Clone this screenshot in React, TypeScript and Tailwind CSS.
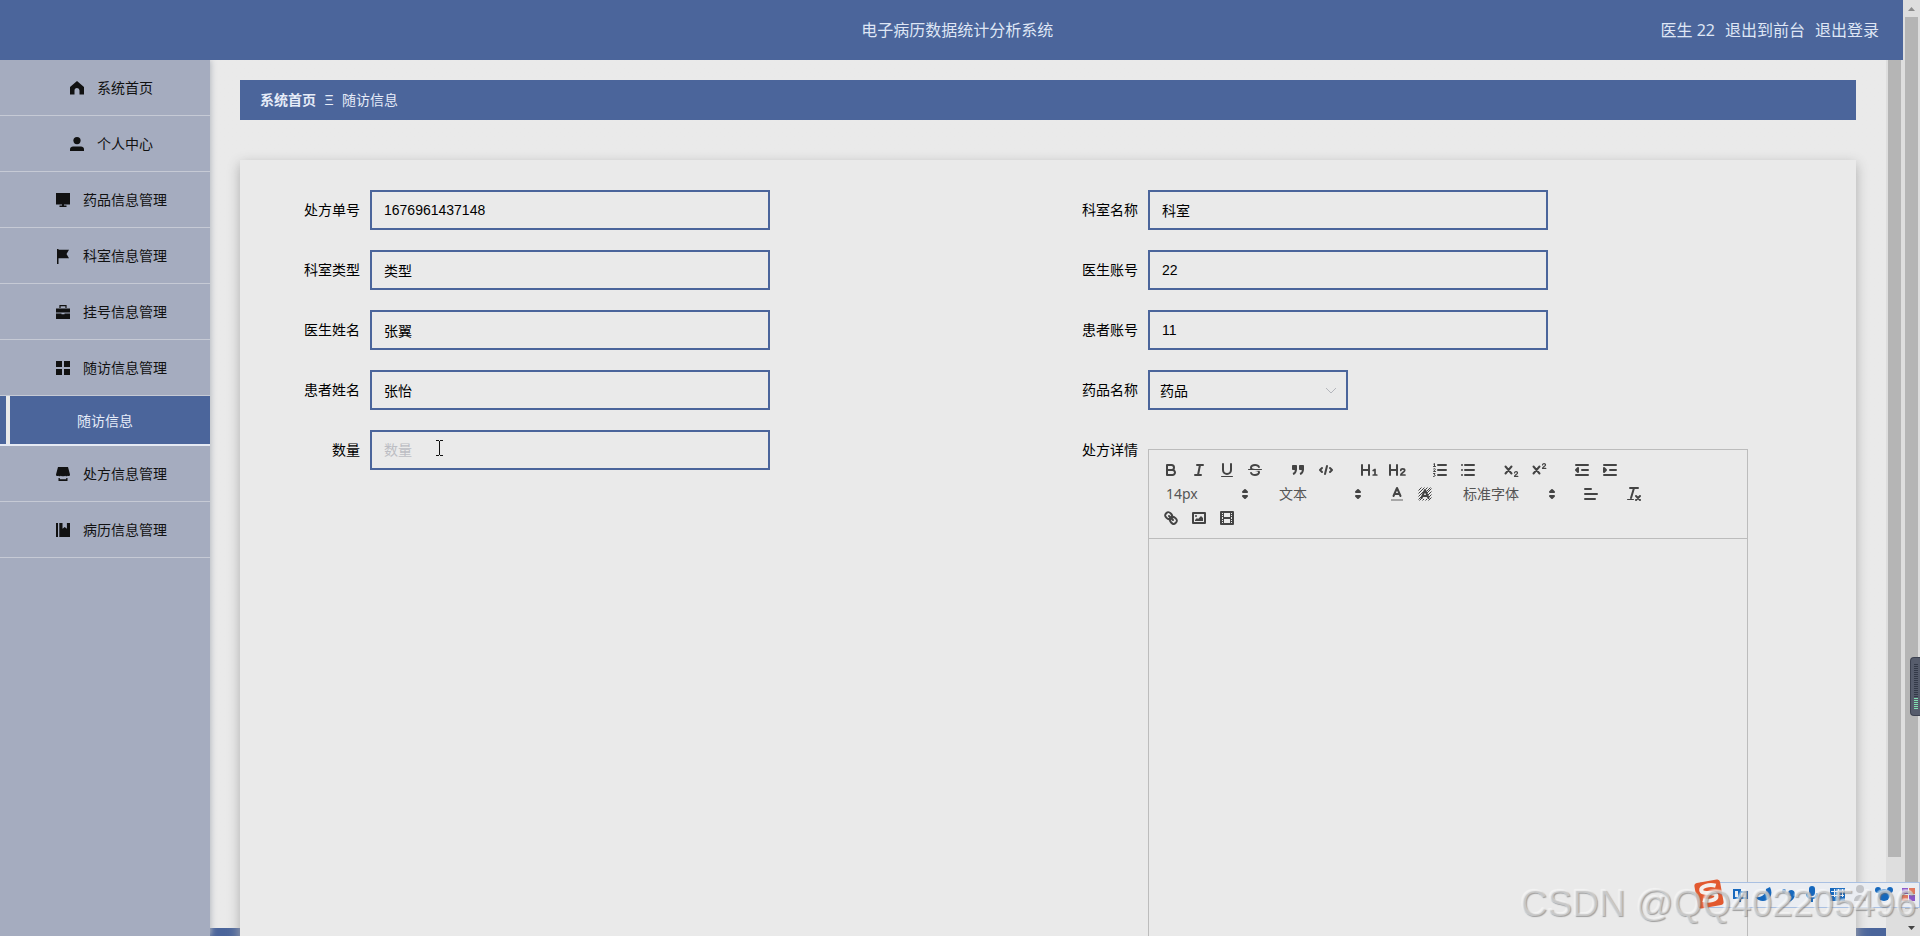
import type { ReactNode } from "react";

const NAV = [
  { icon: "home", label: "系统首页" },
  { icon: "user", label: "个人中心" },
  { icon: "monitor", label: "药品信息管理" },
  { icon: "flag", label: "科室信息管理" },
  { icon: "case", label: "挂号信息管理" },
  { icon: "grid", label: "随访信息管理", child: "随访信息" },
  { icon: "shop", label: "处方信息管理" },
  { icon: "book", label: "病历信息管理" },
];

const NAV_ICONS: Record<string, ReactNode> = {
  home: <path d="M7 0 0 6v7.500h4.500V9.500a2.500 2.500 0 0 1 5 0v4H14V6z" />,
  user: (
    <>
      <circle cx="7" cy="3.600" r="3.600" />
      <path d="M0 14v-1.500C0 10.300 1.500 9.500 3 9.500h8c1.500 0 3 .8 3 3V14z" />
    </>
  ),
  monitor: <path d="M0 0h14v11.500H0zM6 11.500h2v1h2.500V14h-7v-1.500H6z" />,
  flag: <path d="M1 0h1.500v.8H13L10.500 5l2.500 4.200H2.500V15H1z" />,
  case: (
    <>
      <path d="M4 3V.7h6V3" fill="none" stroke="currentColor" strokeWidth="1.200" />
      <path d="M0 3.500h14v4H0zM0 8.500h5.500v.8h3v-.8H14V14H0z" />
    </>
  ),
  grid: <path d="M0 0h6v6H0zM8 0h6v6H8zM0 8h6v6H0zM8 8h6v6H8z" />,
  shop: <path d="M2 0h10l2 7.500c0 1.500-1.300 2-2.300 1.300-.8.700-1.800.700-2.500 0-.8.700-3.600.700-4.400 0-.7.700-1.700.700-2.500 0C1.300 9.500 0 9 0 7.500zM2.500 11h1.300v1.300h6.400V11h1.300v3h-9z" />,
  book: <path d="M0 0h2v14H0zM3.300 0h3.200v5.800L8.700 4l2.200 1.800V0H14v14H3.300z" />,
};

const INK = { stroke: "#444", strokeWidth: 2, fill: "none", strokeLinecap: "round", strokeLinejoin: "round" } as const;

const TOOLS: Record<string, ReactNode> = {
  加粗: (
    <g {...INK}>
      <path d="M5,4H9.500A2.500,2.500,0,0,1,12,6.500v0A2.500,2.500,0,0,1,9.500,9H5A0,0,0,0,1,5,9V4A0,0,0,0,1,5,4Z" />
      <path d="M5,9h5.500A2.500,2.500,0,0,1,13,11.500v0A2.500,2.500,0,0,1,10.500,14H5a0,0,0,0,1,0,0V9A0,0,0,0,1,5,9Z" />
    </g>
  ),
  斜体: <path {...INK} d="M7 4H13M5 14H11M8 14 10 4" />,
  下划线: (
    <>
      <path {...INK} d="M5,3V9a4.012,4.012,0,0,0,4,4H9a4.012,4.012,0,0,0,4-4V3" />
      <rect fill="#444" x="3" y="15" width="12" height="1" rx=".5" />
    </>
  ),
  删除线: (
    <>
      <path {...INK} strokeWidth="1" d="M15.500 8.500H2.500" />
      <path fill="#444" d="M9.007,8C6.542,7.791,6,7.519,6,6.500,6,5.792,7.283,5,9,5c1.571,0,2.765.679,2.969,1.309a1,1,0,0,0,1.900-.617C13.356,4.106,11.354,3,9,3,6.200,3,4,4.538,4,6.500a3.200,3.200,0,0,0,.5,1.843Z" />
      <path fill="#444" d="M8.984,10C11.457,10.208,12,10.479,12,11.500c0,0.708-1.283,1.500-3,1.500-1.571,0-2.765-.679-2.969-1.309a1,1,0,1,0-1.900.617C4.644,13.894,6.646,15,9,15c2.800,0,5-1.538,5-3.500a3.200,3.200,0,0,0-.5-1.843Z" />
    </>
  ),
  引用: (
    <g fill="#444" stroke="#444">
      <rect x="4" y="5" width="3" height="3" />
      <rect x="11" y="5" width="3" height="3" />
      <path strokeWidth="2" d="M7,8c0,4.031-3,5-3,5M14,8c0,4.031-3,5-3,5" fill="none" />
      <path strokeWidth="2" d="M4 5h3v3H4zM11 5h3v3h-3z" strokeLinejoin="round" />
    </g>
  ),
  代码块: <path {...INK} d="M5 7 3 9 5 11M13 7 15 9 13 11M10 5 8 13" />,
  标题1: (
    <>
      <path fill="#444" d="M10,4V14a1,1,0,0,1-2,0V10H3v4a1,1,0,0,1-2,0V4A1,1,0,0,1,3,4V8H8V4a1,1,0,0,1,2,0Z" />
      <path {...INK} strokeWidth="1.700" d="M13.200 9.500 15 8.500V14M13.200 14h3.600" />
    </>
  ),
  标题2: (
    <>
      <path fill="#444" d="M10,4V14a1,1,0,0,1-2,0V10H3v4a1,1,0,0,1-2,0V4A1,1,0,0,1,3,4V8H8V4a1,1,0,0,1,2,0Z" />
      <path {...INK} strokeWidth="1.700" d="M12.800 9.500c.1-2.100 3.900-2.100 3.900 0 0 1.600-3.900 2.600-3.900 4.500h4.200" />
    </>
  ),
  有序列表: (
    <>
      <path {...INK} d="M7 4H15M7 9H15M7 14H15" />
      <path {...INK} strokeWidth="1" d="M2.500 5.500H4.500M2.700 3 3.500 2.500V5.500M2.500 8c.6-.8 2-.5 1.800.4L2.500 10.500H4.500M2.500 12.500H4L3.300 13.800c1.500 0 1.300 1.700-.8 1.700" />
    </>
  ),
  无序列表: <path {...INK} d="M6 4H15M6 9H15M6 14H15M3 4H3M3 9H3M3 14H3" />,
  下标: (
    <>
      <path {...INK} d="M3.500 5.500 9.500 12.500M9.500 5.500 3.500 12.500" />
      <path {...INK} strokeWidth="1.200" d="M12.500 12c.1-2 3.200-1.700 3 .1-.2 1.200-3 1.800-3 3.300h3.300" />
    </>
  ),
  上标: (
    <>
      <path {...INK} d="M3.500 5.500 9.500 12.500M9.500 5.500 3.500 12.500" />
      <path {...INK} strokeWidth="1.200" d="M12.500 4c.1-2 3.200-1.700 3 .1-.2 1.200-3 1.800-3 3.300h3.300" />
    </>
  ),
  减少缩进: (
    <>
      <path {...INK} d="M3 14H15M3 4H15M9 9H15" />
      <path {...INK} fill="#444" d="M5 7V11L3 9Z" />
    </>
  ),
  增加缩进: (
    <>
      <path {...INK} d="M3 14H15M3 4H15M9 9H15" />
      <path {...INK} fill="#444" d="M3 7V11L5 9Z" />
    </>
  ),
  字体颜色: (
    <>
      <path stroke="#444" strokeWidth="2" opacity=".4" d="M3 15H15" />
      <path {...INK} d="M5.500 11 9 3 12.500 11M11.630 9H6.380" />
    </>
  ),
  背景颜色: (
    <>
      <path stroke="#444" strokeWidth="1" d="M2.500 5.500l3-3M2.500 8.500l6-6M2.500 11.500l9-9M2.500 14.500l12-12M3.500 15.500l12-12M6.500 15.500l9-9M9.500 15.500l6-6M12.500 15.500l3-3" />
      <path stroke="#eaeaea" strokeWidth="2" fill="#eaeaea" d="M6 13 9 5 12 13z" />
      <path {...INK} d="M5.500 13 9 5 12.500 13M11.630 11H6.380" />
    </>
  ),
  对齐方式: <path {...INK} d="M3 9H15M3 14H13M3 4H9" />,
  清除格式: (
    <>
      <path {...INK} d="M5 3H13M6 13 9 3" />
      <path {...INK} d="M11 11 15 15M15 11 11 15" />
      <rect fill="#444" x="2" y="14" width="7" height="1" rx=".5" />
    </>
  ),
  链接: (
    <g {...INK}>
      <path d="M7 7 11 11" />
      <path d="M8.900,4.577a3.476,3.476,0,0,1,.36,4.679A3.476,3.476,0,0,1,4.577,8.900C3.185,7.500,2.035,6.400,4.217,4.217S7.500,3.185,8.900,4.577Z" />
      <path d="M13.423,9.100a3.476,3.476,0,0,0-4.679-.36,3.476,3.476,0,0,0,.36,4.679c1.392,1.392,2.500,2.542,4.679.36S14.815,10.500,13.423,9.100Z" />
    </g>
  ),
  图片: (
    <>
      <rect {...INK} x="3" y="4" width="12" height="10" />
      <circle fill="#444" cx="6" cy="7" r="1" />
      <path fill="#444" d="M5 12v-1l2-2 1 1 3-3 2 2v3z" />
    </>
  ),
  视频: (
    <>
      <rect {...INK} x="3" y="3" width="12" height="12" />
      <path fill="#444" d="M5 3h1v12H5zM12 3h1v12h-1zM5 8h8v2H5zM3 5h3v1H3zM3 7h3v1H3zM3 10h3v1H3zM3 12h3v1H3zM12 5h3v1h-3zM12 7h3v1h-3zM12 10h3v1h-3zM12 12h3v1h-3z" />
    </>
  ),
};

function Tools({ names }: { names: string[] }) {
  return (
    <div className="mr-[15px] flex">
      {names.map((name) => (
        <button key={name} type="button" aria-label={name} className="h-6 w-7 px-[5px] py-[3px]">
          <svg viewBox="0 0 18 18" className="size-[18px]" aria-hidden="true">
            {TOOLS[name]}
          </svg>
        </button>
      ))}
    </div>
  );
}

function Picker({ label, value, wide = false }: { label: string; value: string; wide?: boolean }) {
  return (
    <div className={wide ? "relative mr-[15px] h-6 w-[108px]" : "relative mr-[15px] h-6 w-[98px]"}>
      <select
        aria-label={label}
        className="h-6 w-full appearance-none bg-transparent pl-[9px] font-['Noto_Sans','Noto_Sans_CJK_SC',sans-serif] text-sm leading-6 text-[#555]"
      >
        <option>{value}</option>
      </select>
      <svg viewBox="0 0 18 18" className="pointer-events-none absolute top-[3px] right-px size-[18px]" aria-hidden="true">
        <path {...INK} fill="#444" d="M7 11 9 13 11 11ZM7 7 9 5 11 7Z" />
      </svg>
    </div>
  );
}

function Row({ id, label, children }: { id: string; label: string; children: ReactNode }) {
  return (
    <div className="flex items-start">
      <label htmlFor={id} className="w-[100px] shrink-0 pr-2.5 text-right text-sm leading-10 text-black">
        {label}
      </label>
      {children}
    </div>
  );
}

function Field({ id, label, value, placeholder }: { id: string; label: string; value?: string; placeholder?: string }) {
  return (
    <Row id={id} label={label}>
      <input
        id={id}
        defaultValue={value}
        placeholder={placeholder}
        className="h-10 w-[400px] border-2 border-[#4b659b] bg-transparent px-3 text-sm text-black outline-none placeholder:text-[#bcbdc3]"
      />
    </Row>
  );
}

function ImeBar() {
  return (
    <div className="absolute right-0 bottom-7 h-[26px] w-[220px] border border-[#a9c0e2] bg-[#eaedf2]">
      <svg viewBox="0 0 228 36" className="absolute right-0 -bottom-1 h-9 w-[228px] max-w-none" aria-hidden="true">
        <g transform="translate(2 1) rotate(-10 16 18)">
          <rect x="3" y="5" width="26" height="26" rx="3" fill="#e2592f" />
          <path d="M24 11c-6-3-15-2-15 2 0 5 14 3 14 8 0 4-8 5-14 2" fill="none" stroke="#f4efec" strokeWidth="4" />
        </g>
        <g transform="translate(2 3)">
          <path d="M41 12h5v8h-5zM46 14h8v6h-8M47 11v13" fill="none" stroke="#1668bd" strokeWidth="2" />
          <path d="M77 9C83 21 69 28 62 19C69 20 73 16 73 11Z" fill="#1668bd" />
          <circle cx="91" cy="13" r="2" fill="#1668bd" />
          <path d="M95 15c0-4 7-4 7 1 0 4-3 7-6 8 2-2 3-4 2-6-2 0-3-1-3-3z" fill="#1668bd" />
          <g fill="#1668bd">
            <rect x="116" y="8" width="6" height="10" rx="3" />
            <path d="M113 15h2c0 6 8 6 8 0h2c0 4-2 6-5 6v3h-2v-3c-3 0-5-2-5-6z" />
            <path d="M137 10h15v13h-15z" />
            <circle cx="191" cy="17" r="6" />
            <circle cx="185" cy="12" r="3" />
            <circle cx="197" cy="12" r="3" />
          </g>
          <path d="M138 13.500h13M138 17.500h13M141.500 11v8M145.500 11v8M149.500 11v8" stroke="#eaedf2" />
          <g fill="#c2c4c8">
            <circle cx="167" cy="11" r="4" />
            <path d="M161 23c0-8 12-8 12 0z" />
          </g>
          <path d="M209 10h6v6h-6zM216 17h6v6h-6z" fill="#8a55c8" />
          <path d="M216 10h6v6h-6zM209 17h6v6h-6z" fill="#e0785f" />
        </g>
      </svg>
    </div>
  );
}

export default function App() {
  return (
    <div className="relative flex h-screen overflow-hidden bg-[#eaeaea] font-['Liberation_Sans','Noto_Sans_CJK_SC',sans-serif] text-sm">
      <div className="flex min-w-0 flex-1 flex-col">
        <header className="relative z-20 flex h-[60px] shrink-0 items-center justify-end bg-[#4b659b] pr-6 font-['Noto_Sans','Noto_Sans_CJK_SC',sans-serif] text-base text-[#dfe6f5]">
          <h1 className="flex-1 pl-6 text-center">
            <span className="pl-[230px]">电子病历数据统计分析系统</span>
          </h1>
          <div className="flex gap-2.5">
            <span>医生 22</span>
            <a href="#front">退出到前台</a>
            <a href="#logout">退出登录</a>
          </div>
        </header>

        <div className="flex min-h-0 flex-1">
          <nav className="z-10 w-[210px] shrink-0 bg-[#a5acbf] shadow-[1px_0_6px_#b4b8c0]">
            <ul>
              {NAV.map((item) => (
                <li key={item.label}>
                  <a
                    href="#nav"
                    className="flex h-14 items-center justify-center gap-[13px] border-b border-[#c6cad5] pl-[13px] text-sm text-[#111]"
                  >
                    <svg viewBox="0 0 14 15" className="mt-0.5 h-[15px] w-3.5 shrink-0" fill="currentColor" aria-hidden="true">
                      {NAV_ICONS[item.icon]}
                    </svg>
                    {item.label}
                  </a>
                  {item.child && (
                    <div className="border-b-2 border-[#e6eaf4] bg-[#4b659b] pl-1.5">
                      <a
                        href="#follow"
                        className="flex h-12 items-center justify-center border-l-4 border-[#eaeaea] pt-0.5 pr-2.5 text-sm text-[#e6ecf8]"
                      >
                        {item.child}
                      </a>
                    </div>
                  )}
                </li>
              ))}
            </ul>
          </nav>

          <main className="flex min-w-0 flex-1 flex-col overflow-hidden bg-linear-to-t from-[#4b659b] from-[8px] to-[#eaeaea] to-[8px] px-[30px] pt-5">
            <div className="flex h-10 shrink-0 items-center bg-[#4b659b] px-5 text-sm text-[#e6ecf8]">
              <a href="#home" className="font-bold">系统首页</a>
              <span className="mx-2 w-2.5 text-center">Ξ</span>
              <span>随访信息</span>
            </div>

            <form className="mt-10 grid flex-1 grid-cols-2 bg-[#eaeaea] p-[30px] shadow-[0_4px_12px_#acacac]">
              <div className="flex flex-col gap-5">
                <Field id="order" label="处方单号" value="1676961437148" />
                <Field id="dept-type" label="科室类型" value="类型" />
                <Field id="doctor" label="医生姓名" value="张翼" />
                <Field id="patient" label="患者姓名" value="张怡" />
                <Field id="amount" label="数量" placeholder="数量" />
              </div>
              <div className="flex flex-col gap-5">
                <Field id="dept" label="科室名称" value="科室" />
                <Field id="doctor-no" label="医生账号" value="22" />
                <Field id="patient-no" label="患者账号" value="11" />
                <Row id="drug" label="药品名称">
                  <div className="relative w-[200px]">
                    <select
                      id="drug"
                      className="h-10 w-full appearance-none border-2 border-[#4b659b] bg-transparent px-2.5 pt-0.5 text-sm text-black"
                    >
                      <option>药品</option>
                    </select>
                    <svg viewBox="0 0 12 8" className="pointer-events-none absolute top-[17px] right-[11px] h-2 w-3" aria-hidden="true">
                      <path d="M1 1l5 5 5-5" fill="none" stroke="#b4b6bc" />
                    </svg>
                  </div>
                </Row>
                <Row id="detail" label="处方详情">
                  <div className="mt-[19px] w-[600px] border border-[#bcbcbc]">
                    <div className="flex flex-wrap border-b border-[#bcbcbc] p-2">
                      <Tools names={["加粗", "斜体", "下划线", "删除线"]} />
                      <Tools names={["引用", "代码块"]} />
                      <Tools names={["标题1", "标题2"]} />
                      <Tools names={["有序列表", "无序列表"]} />
                      <Tools names={["下标", "上标"]} />
                      <Tools names={["减少缩进", "增加缩进"]} />
                      <Picker label="字号" value="14px" />
                      <Picker label="段落" value="文本" />
                      <Tools names={["字体颜色", "背景颜色"]} />
                      <Picker label="字体" value="标准字体" wide />
                      <Tools names={["对齐方式"]} />
                      <Tools names={["清除格式"]} />
                      <Tools names={["链接", "图片", "视频"]} />
                    </div>
                    <textarea id="detail" className="block h-[500px] w-full resize-none bg-transparent p-3 outline-none" />
                  </div>
                </Row>
              </div>
            </form>
          </main>

          <div className="w-[17px] shrink-0 bg-[#dedede] px-0.5" aria-hidden="true">
            <div className="h-[91%] bg-[#b5b5b5]" />
          </div>
        </div>
      </div>

      <div className="flex w-[17px] shrink-0 flex-col items-center bg-[#dedede]" aria-hidden="true">
        <svg viewBox="0 0 17 17" className="size-[17px] shrink-0">
          <path d="M5 11l3.500-4 3.500 4z" fill="#8c8c8c" />
        </svg>
        <div className="w-[13px] flex-1 bg-[#b5b5b5]" />
        <svg viewBox="0 0 17 27" className="h-[27px] w-[17px] shrink-0">
          <path d="M5 17l3.500 4 3.500-4z" fill="#444" />
        </svg>
      </div>

      <svg viewBox="0 0 7 16" className="absolute top-[440px] left-[436px] z-20 h-4 w-[7px]" aria-hidden="true">
        <path d="M0 .5h3M4 .5h3M3.500 1v14M0 15.500h3M4 15.500h3" stroke="#111" fill="none" />
      </svg>

      <svg viewBox="0 0 10 59" className="absolute top-[657px] right-0 z-20 h-[59px] w-2.5" aria-hidden="true">
        <path d="M10 0H4Q0 0 0 4v51q0 4 4 4h6z" fill="#3c4150" />
        <path d="M10 1H4Q1 1 1 4v51q0 3 3 3h6z" fill="#565c6c" />
        <path d="M6 7v33" stroke="#333948" strokeWidth="4" strokeDasharray="1 1" />
        <path d="M6 41v12" stroke="#7fe0b0" strokeWidth="4" strokeDasharray="1 1" />
      </svg>

      <ImeBar />
      <p className="pointer-events-none absolute right-1 bottom-2 z-30 font-['Liberation_Sans',sans-serif] text-[37px] leading-[48px] whitespace-nowrap text-[#ececec]/50 [text-shadow:1px_1px_1px_rgb(110_110_110/0.6),-1px_-1px_1px_rgb(255_255_255/0.5)]">
        CSDN @QQ402205496
      </p>
    </div>
  );
}
